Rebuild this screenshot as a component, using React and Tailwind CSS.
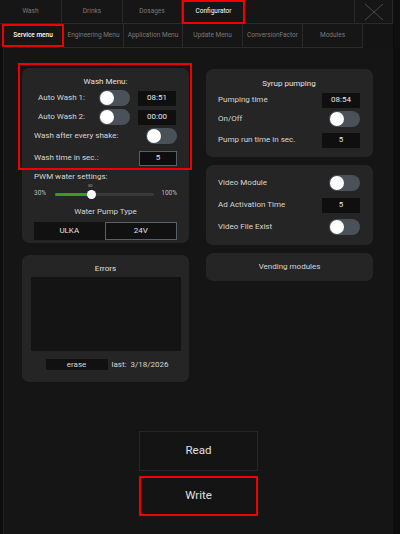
import React from "react";

const F = { fontFamily: "Roboto, 'Liberation Sans', sans-serif" };

function Toggle() {
  return (
    <div className="relative w-[31px] h-[16px] rounded-full bg-[#4a5159]">
      <div className="absolute left-[1px] top-[1px] w-[14px] h-[14px] rounded-full bg-white" />
    </div>
  );
}

function Box({ children, bordered }) {
  return (
    <div
      className={
        "w-[38px] h-[15px] flex items-center justify-center text-[8px] text-[#e8e8e8] " +
        (bordered ? "bg-[#0e0e0e] border border-[#59606b]" : "bg-[#0f0f0f]")
      }
    >
      {children}
    </div>
  );
}

function Row({ label, children, h = "h-[16px]" }) {
  return (
    <div className={"flex items-center justify-between " + h}>
      <span className="text-[8px] text-[#d6d6d6] whitespace-nowrap">{label}</span>
      {children}
    </div>
  );
}

export default function App() {
  const topTabs = [
    { t: "Wash", w: "w-[62px]" },
    { t: "Drinks", w: "w-[61px]" },
    { t: "Dosages", w: "w-[59px]" },
  ];
  const subTabs = [
    { t: "Engineering Menu", w: "w-[60px]" },
    { t: "Application Menu", w: "w-[59px]" },
    { t: "Update Menu", w: "w-[60px]" },
    { t: "ConversionFactor", w: "w-[60px]" },
    { t: "Modules", w: "w-[60px]" },
  ];
  return (
    <div style={F} className="relative w-[400px] h-[534px] bg-[#0d0d0d] overflow-hidden flex flex-col">
      {/* Top tabs */}
      <div className="flex h-[24px] bg-[#141414]">
        {topTabs.map((x) => (
          <div
            key={x.t}
            className={x.w + " h-full flex items-center justify-center border-r border-b border-[#2a2a2a] bg-[#161616] text-[6.5px] text-[#7a7a7a]"}
          >
            {x.t}
          </div>
        ))}
        <div className="w-[63px] h-full flex items-center justify-center border-2 border-[#f00000] bg-[#161616] text-[6.5px] text-white">
          Configurator
        </div>
        <div className="w-[110px] h-full border-r border-b border-[#2a2a2a] bg-[#161616]" />
        <div className="w-[38px] h-full flex items-center justify-center border-r border-b border-[#2a2a2a] bg-[#161616]">
          <svg width="22" height="18" viewBox="0 0 22 18">
            <path d="M2 1 L20 17 M20 1 L2 17" stroke="#4a4a4a" strokeWidth="1" fill="none" />
          </svg>
        </div>
        <div className="flex-1 bg-[#0f0f0f]" />
      </div>
      {/* Sub tabs */}
      <div className="flex h-[24px] bg-[#141414]">
        <div className="w-[2px]" />
        <div className="w-[62px] h-[23px] flex items-center justify-center border-2 border-[#f00000] bg-[#161616] text-[6.5px] text-white font-medium">
          Service menu
        </div>
        {subTabs.map((x) => (
          <div
            key={x.t}
            className={x.w + " h-full flex items-center justify-center border-r border-b border-[#2a2a2a] bg-[#161616] text-[6.5px] text-[#7a7a7a]"}
          >
            {x.t}
          </div>
        ))}
        <div className="w-[31px] h-full bg-[#141414] border-r border-[#0a0a0a]" />
        <div className="flex-1 bg-[#0f0f0f]" />
      </div>

      {/* Main area */}
      <div className="flex-1 ml-[3px] mr-[7px] border-l border-[#1f1f1f] bg-[#151515] flex flex-col items-center">
        <div className="flex gap-[17px] mt-[20px] mr-[2px]">
          {/* Left column */}
          <div className="w-[167px] flex flex-col gap-[12px]">
            <div className="relative h-[175px] rounded-[7px] bg-[#252525] px-[12px] pt-[7px] flex flex-col">
              <div className="h-[14px] flex items-center justify-center text-[8px] text-[#e2e2e2]">Wash Menu:</div>
              <div className="flex items-center h-[16px] mt-[1px]">
                <span className="w-[51px] text-right text-[8px] text-[#d6d6d6] whitespace-nowrap">Auto Wash 1:</span>
                <div className="ml-[14px]"><Toggle /></div>
                <div className="ml-[8px]"><Box>08:51</Box></div>
              </div>
              <div className="flex items-center h-[16px] mt-[3px]">
                <span className="w-[51px] text-right text-[8px] text-[#d6d6d6] whitespace-nowrap">Auto Wash 2:</span>
                <div className="ml-[14px]"><Toggle /></div>
                <div className="ml-[8px]"><Box>00:00</Box></div>
              </div>
              <div className="mt-[3px]">
                <Row label="Wash after every shake:"><Toggle /></Row>
              </div>
              <div className="mt-[6px]">
                <Row label="Wash time in sec.:"><Box bordered>5</Box></Row>
              </div>
              <div className="h-[12px] mt-[5px] flex items-center text-[8px] text-[#d6d6d6]">PWM water settings:</div>
              <div className="h-[12px] mt-[5px] flex items-center">
                <span className="text-[6.5px] text-[#bdbdbd] w-[21px]">30%</span>
                <div className="relative flex-1 h-[3px] rounded-full bg-[#3a3a3a]">
                  <div className="absolute left-0 top-0 h-[3px] w-[36px] rounded-full bg-[#3f9a1c]" />
                  <div className="absolute left-[32px] top-[-3px] w-[9px] h-[9px] rounded-full bg-white" />
                  <div className="absolute left-[33px] top-[-10px] text-[4px] text-[#aaa]">50</div>
                </div>
                <span className="text-[6.5px] text-[#bdbdbd] w-[23px] text-right">100%</span>
              </div>
              <div className="h-[12px] mt-[6px] flex items-center justify-center text-[8px] text-[#d6d6d6]">Water Pump Type</div>
              <div className="flex mt-[4px] h-[18px]">
                <div className="flex-1 bg-[#111111] flex items-center justify-center text-[8px] text-[#e0e0e0]">ULKA</div>
                <div className="flex-1 bg-[#111111] border border-[#59606b] flex items-center justify-center text-[8px] text-[#e0e0e0]">24V</div>
              </div>
              {/* annotation box */}
              <div className="absolute left-[-4px] top-[-5px] w-[174px] h-[107px] border-[2.5px] border-[#f00000] pointer-events-none" />
            </div>
            <div className="h-[127px] rounded-[7px] bg-[#252525] flex flex-col items-center pt-[7px]">
              <div className="h-[14px] flex items-center text-[8px] text-[#e2e2e2]">Errors</div>
              <div className="w-[150px] h-[74px] bg-[#141414] mt-[1px]" />
              <div className="flex items-center mt-[8px] h-[11px] w-[150px]">
                <div className="ml-[15px] w-[62px] h-[11px] bg-[#111111] flex items-center justify-center text-[8px] text-[#d6d6d6]">erase</div>
                <span className="ml-[4px] text-[8px] text-[#d6d6d6]">last:</span>
                <span className="ml-[4px] text-[8px] text-[#d6d6d6]">3/18/2026</span>
              </div>
            </div>
          </div>

          {/* Right column */}
          <div className="w-[167px] flex flex-col gap-[8px] pt-[1px]">
            <div className="h-[88px] rounded-[7px] bg-[#252525] pl-[12px] pr-[13px] pt-[9px] flex flex-col">
              <div className="h-[12px] flex items-center justify-center text-[8px] text-[#e2e2e2]">Syrup pumping</div>
              <div className="mt-[2px]"><Row label="Pumping time"><Box>08:54</Box></Row></div>
              <div className="mt-[3px]"><Row label="On/Off"><Toggle /></Row></div>
              <div className="mt-[5px]"><Row label="Pump run time in sec."><Box>5</Box></Row></div>
            </div>
            <div className="h-[80px] rounded-[7px] bg-[#252525] pl-[12px] pr-[13px] pt-[10px] flex flex-col">
              <Row label="Video Module"><Toggle /></Row>
              <div className="mt-[6px]"><Row label="Ad Activation Time"><Box>5</Box></Row></div>
              <div className="mt-[6px]"><Row label="Video File Exist"><Toggle /></Row></div>
            </div>
            <div className="h-[28px] rounded-[7px] bg-[#252525] flex items-center justify-center text-[8px] text-[#d6d6d6]">
              Vending modules
            </div>
          </div>
        </div>

        {/* Buttons */}
        <div className="mt-[49px] w-[119px] h-[40px] border border-[#262626] bg-[#141414] flex items-center justify-center text-[11.5px] text-[#e0e0e0]">
          Read
        </div>
        <div className="mt-[5px] w-[119px] h-[40px] border-[2.5px] border-[#f00000] bg-[#141414] flex items-center justify-center text-[11.5px] text-[#e0e0e0]">
          Write
        </div>
      </div>
    </div>
  );
}
